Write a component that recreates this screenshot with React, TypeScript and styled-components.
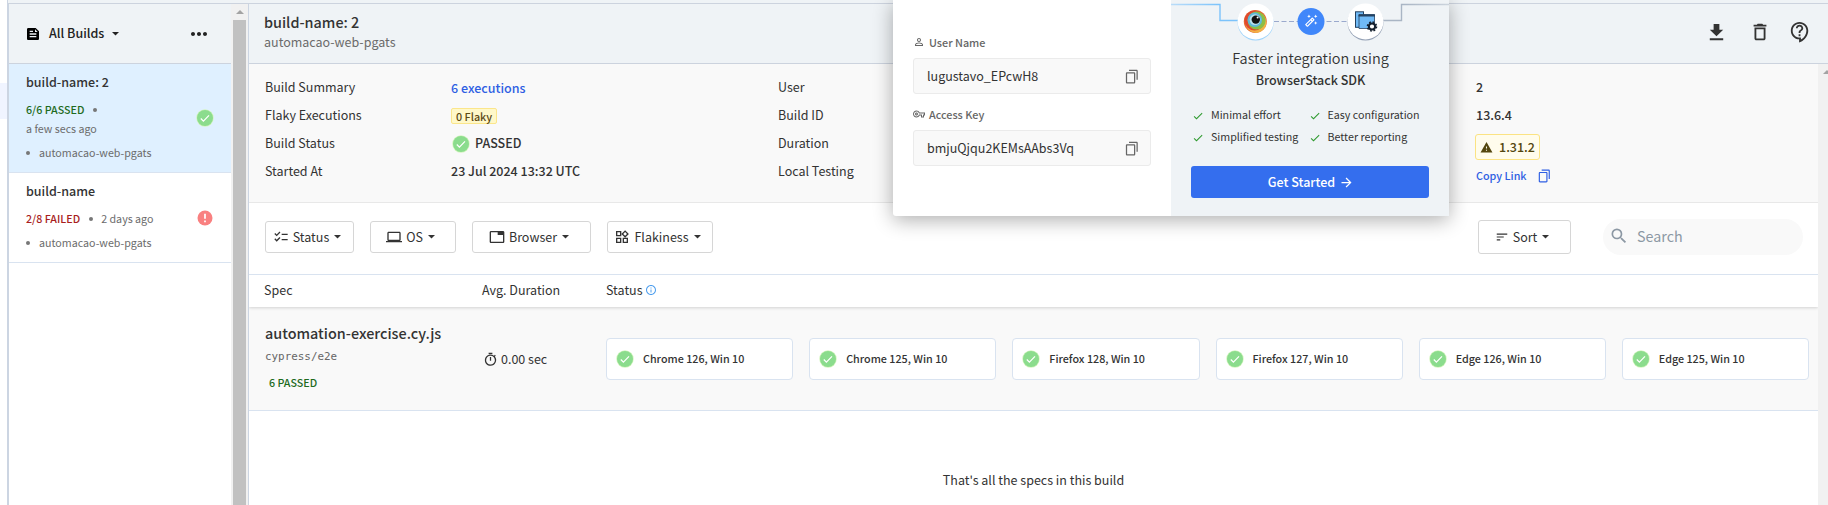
import React from 'react';
import styled, { createGlobalStyle } from 'styled-components';
import {
  MdArrowForward, MdCheck, MdChecklist, MdContentCopy, MdDeleteOutline, MdFeed,
  MdGetApp, MdInfoOutline, MdLaptop, MdMoreHoriz, MdOutlineAutoFixHigh, MdOutlineContactSupport,
  MdOutlineTimer, MdOutlineVpnKey, MdOutlineWidgets, MdPersonOutline, MdSearch, MdSort, MdTab, MdWarning,
} from 'react-icons/md';

const GlobalStyle = createGlobalStyle`
  * { box-sizing: border-box; }
  body {
    margin: 0;
    overflow: hidden;
    background: #fff;
    color: #333;
    font-family: 'Noto Sans CJK SC', 'Open Sans', sans-serif;
    font-size: 12.5px;
    line-height: 20px;
  }
  svg { display: block; flex: none; }
`;

const Page = styled.div`
  position: relative;
  display: flex;
  width: 1828px;
  height: 505px;
  overflow: hidden;
`;
const Rail = styled.div`
  width: 7px;
  flex: none;
  padding-top: 83px;
`;
const RailActive = styled.div`
  height: 36px;
  background: #f0f4ff;
`;
const Frame = styled.div`
  display: flex;
  flex-direction: column;
  width: 1821px;
  flex: none;
  border-left: 2px solid #ccd5e2;
`;
const TopStrip = styled.div`
  height: 4px;
  flex: none;
  margin-left: -1px;
  background: #eff3f6;
  border-bottom: 1px solid #ccd3de;
`;
const Columns = styled.div`
  display: flex;
  flex: 1;
  min-height: 0;
`;
const Sidebar = styled.aside`
  width: 222px;
  flex: none;
`;
const SidebarHeader = styled.div`
  display: flex;
  align-items: center;
  height: 60px;
  padding: 0 20px 0 16px;
  background: #eff3f6;
  border-bottom: 1px solid #ccd3de;
  color: #222;
`;
const SidebarTitle = styled.span`
  margin: 0 3px 0 8px;
  padding-bottom: 1px;
  font-weight: 500;
`;
const Spacer = styled.div`
  flex: 1;
`;
const BuildItem = styled.div<{ $active?: boolean }>`
  display: flex;
  align-items: center;
  justify-content: space-between;
  height: ${p => (p.$active ? 109 : 90)}px;
  padding: 0 17px;
  background: ${p => (p.$active ? '#dff0ff' : '#fff')};
  border-bottom: 1px solid #d9e3f0;
`;
const BuildText = styled.div`
  display: flex;
  flex-direction: column;
  height: 100%;
  padding-top: 8px;
`;
const BuildName = styled.div`
  margin-bottom: 8px;
  font-weight: 500;
`;
const BuildLine = styled.div<{ $gap?: number }>`
  display: flex;
  align-items: center;
  height: 19px;
  margin-top: ${p => p.$gap ?? 0}px;
  color: #6b6b6b;
  font-size: 10.7px;
`;
const BuildResult = styled.span<{ $color: string }>`
  color: ${p => p.$color};
  font-weight: 500;
`;
const Dot = styled.i<{ $l?: number; $r?: number }>`
  width: 4px;
  height: 4px;
  margin: 0 ${p => p.$r ?? 0}px 0 ${p => p.$l ?? 0}px;
  border-radius: 50%;
  background: #777;
`;
const ScrollTrack = styled.div`
  display: flex;
  flex-direction: column;
  align-items: center;
  width: 17px;
  flex: none;
  padding-top: 6px;
  background: #f1f1f1;
`;
const ScrollThumb = styled.div`
  width: 13px;
  flex: 1;
  margin-top: 6px;
  background: #c1c1c1;
`;
const ScrollArrow = styled.i`
  border: 4px solid transparent;
  border-top: 0;
  border-bottom-color: #a3a3a3;
`;
const Main = styled.main`
  display: flex;
  flex-direction: column;
  flex: 1;
  min-width: 0;
  border-left: 1px solid #ccd5e2;
`;
const MainHeader = styled.header`
  display: flex;
  align-items: center;
  height: 60px;
  flex: none;
  padding: 0 17px 0 15px;
  background: #eff3f6;
  border-bottom: 1px solid #ccd3de;
`;
const HeaderText = styled.div`
  flex: 1;
  height: 100%;
  padding-top: 8px;
`;
const BuildHeading = styled.h1`
  margin: 0;
  font-size: 14.4px;
  font-weight: 500;
  line-height: 20px;
`;
const ProjectName = styled.div`
  color: #6b6b6b;
`;
const HeaderIcons = styled.div`
  display: flex;
  align-items: center;
  gap: 20px;
  padding-bottom: 3px;
  svg:first-child { margin-right: 1px; }
  svg:last-child { margin-left: -2px; }
`;
const Body = styled.div`
  display: flex;
  flex: 1;
`;
const Content = styled.div`
  width: 1569px;
  flex: none;
`;
const Details = styled.section`
  display: grid;
  grid-template-columns: 186px 327px 698px 1fr;
  height: 139px;
  padding: 9px 0 0 16px;
  background: #f9f9f9;
  border-bottom: 1px solid #e8e8e8;
`;
const DetailColumn = styled.div<{ $strong?: boolean }>`
  display: flex;
  flex-direction: column;
  align-items: flex-start;
  font-weight: ${p => (p.$strong ? 500 : 400)};
`;
const DetailCell = styled.div<{ $h?: number; $drop?: boolean }>`
  display: flex;
  align-items: center;
  gap: 5px;
  height: ${p => p.$h ?? 28}px;
  padding-top: ${p => (p.$drop ? 2 : 0)}px;
`;
const StatusLabel = styled.span`
  padding-bottom: 2px;
`;
const StatusIconSlot = styled.span`
  padding-left: 1px;
`;
const Link = styled.a<{ $small?: boolean }>`
  color: #2f5fe3;
  font-size: ${p => (p.$small ? 10.75 : 12.5)}px;
  margin-right: ${p => (p.$small ? 5 : 0)}px;
`;
const FlakyBadge = styled.span`
  height: 16px;
  padding: 0 4px;
  border: 1px solid #fbe68b;
  border-radius: 2px;
  background: #fff8c9;
  color: #5c4a14;
  font-size: 10.8px;
  line-height: 14px;
`;
const VersionBadge = styled.span`
  display: flex;
  align-items: center;
  gap: 6px;
  height: 26px;
  margin-left: -1px;
  padding: 0 4px;
  border: 1px solid #fbe383;
  border-radius: 3px;
  background: #fffcec;
  color: #54470f;
`;
const Toolbar = styled.div`
  display: flex;
  align-items: center;
  gap: 16px;
  height: 71px;
  padding: 0 15px 3px 16px;
`;
const FilterButton = styled.button<{ $w: number; $h?: number }>`
  display: flex;
  align-items: center;
  justify-content: center;
  width: ${p => p.$w}px;
  height: ${p => p.$h ?? 32}px;
  padding: 0;
  border: 1px solid #d6d6d6;
  border-radius: 3px;
  background: #fff;
  color: #333;
  font: inherit;
`;
const FilterLabel = styled.span`
  margin-left: 4px;
`;
const SearchBox = styled.div`
  display: flex;
  align-items: center;
  gap: 8px;
  width: 200px;
  height: 36px;
  margin-left: 16px;
  padding: 0 0 2px 6px;
  border-radius: 18px;
  background: #f9f9f9;
  color: #8c98a4;
  font-size: 14.3px;
`;
const TableGrid = styled.div`
  display: grid;
  grid-template-columns: 218px 124px 1fr;
`;
const TableHead = styled(TableGrid)`
  position: relative;
  align-items: center;
  height: 33px;
  padding: 0 0 2px 15px;
  border-top: 1px solid #d9e3f0;
  box-shadow: 0 1px 3px rgba(0, 0, 0, 0.16);
  clip-path: inset(0 0 -6px 0);
`;
const HeadCell = styled.div`
  display: flex;
  align-items: center;
  gap: 2px;
`;
const SpecRow = styled(TableGrid)`
  height: 104px;
  padding: 1px 9px 0 15px;
  align-items: center;
  background: #f9f9f9;
  border-bottom: 1px solid #d9e3f0;
`;
const SpecInfo = styled.div`
  padding-bottom: 1px;
`;
const SpecName = styled.div`
  margin-left: 1px;
  font-size: 14.4px;
  font-weight: 500;
  line-height: 18px;
`;
const SpecPath = styled.div`
  margin: 5px 0 6px 1px;
  color: #666;
  font-family: 'DejaVu Sans Mono', monospace;
  font-size: 10.9px;
`;
const SpecResult = styled.div`
  margin-left: 5px;
  color: #1e6b1e;
  font-size: 10.7px;
  font-weight: 500;
`;
const Duration = styled.div`
  display: flex;
  align-items: center;
  gap: 3px;
  padding-left: 1px;
`;
const CardGrid = styled.div`
  display: grid;
  grid-template-columns: repeat(6, 1fr);
  gap: 16px;
`;
const RunCard = styled.div`
  display: flex;
  align-items: center;
  gap: 9px;
  height: 42px;
  padding-left: 9px;
  border: 1px solid #d9e3f0;
  border-radius: 4px;
  background: #fff;
  font-size: 10.75px;
  font-weight: 500;
`;
const EndMessage = styled.p`
  margin: 59px 0 0;
  text-align: center;
`;

const Popup = styled.div`
  position: absolute;
  top: 0;
  left: 893px;
  display: flex;
  width: 556px;
  height: 216px;
  border-radius: 0 0 3px 3px;
  background: #fff;
  box-shadow: 0 4px 20px rgba(0, 0, 0, 0.32);
`;
const Credentials = styled.div`
  width: 278px;
  padding: 32px 20px 0;
`;
const FieldLabel = styled.div`
  display: flex;
  align-items: center;
  gap: 4px;
  height: 20px;
  padding-bottom: 1px;
  color: #666;
  font-size: 10.8px;
  font-weight: 500;
`;
const FieldBox = styled.div`
  display: flex;
  align-items: center;
  justify-content: space-between;
  height: 36px;
  margin: 6px 0 10px;
  padding: 0 11px 0 13px;
  border: 1px solid #ebebeb;
  border-radius: 3px;
  background: #f9f9f9;
`;
const Flipped = styled.span<{ $color?: string }>`
  color: ${p => p.$color ?? '#666'};
  transform: scaleX(-1);
`;
const Promo = styled.div`
  display: flex;
  flex-direction: column;
  width: 278px;
  background: #eff3f6;
`;
const ArtWrap = styled.div`
  position: relative;
  height: 43px;
`;
const Wand = styled(MdOutlineAutoFixHigh)`
  position: absolute;
  left: 133px;
  top: 14px;
  color: #fff;
`;
const PromoTitle = styled.div`
  margin-top: 5px;
  padding-left: 1px;
  text-align: center;
  font-size: 14.5px;
  font-weight: 350;
`;
const PromoSubtitle = styled.div`
  margin-top: 2px;
  padding-left: 1px;
  text-align: center;
  font-weight: 500;
`;
const Benefits = styled.div`
  display: grid;
  grid-template-columns: 116.5px 1fr;
  grid-auto-rows: 22px;
  margin: 14px 0 0 21px;
  font-size: 10.7px;
`;
const Benefit = styled.div`
  display: flex;
  align-items: center;
  gap: 7px;
  white-space: nowrap;
  svg { margin-top: 1px; }
`;
const StartButton = styled.button`
  display: flex;
  align-items: center;
  justify-content: center;
  gap: 4px;
  height: 32px;
  margin: 18px 20px 0;
  padding: 0 0 0 2px;
  border: 0;
  border-radius: 3px;
  background: #346eee;
  color: #fff;
  font: inherit;
  font-weight: 500;
`;

const PassIcon = () => (
  <svg width="18" height="18" viewBox="0 0 18 18">
    <circle cx="9" cy="9" r="8.7" fill="#d3f5bd" />
    <circle cx="9" cy="9" r="8" fill="#8bdc8d" />
    <path d="M4.8 9.5l2.6 2.6 5.6-5.8" fill="none" stroke="#fff" strokeWidth="1.2" />
  </svg>
);
const FailIcon = () => (
  <svg width="18" height="18" viewBox="0 0 18 18">
    <circle cx="9" cy="9" r="7.5" fill="#f98080" />
    <path d="M9 4.8v5M9 11.4v1.8" stroke="#fff" strokeWidth="1.7" />
  </svg>
);
const Caret = () => (
  <svg width="17" height="8" viewBox="0 0 17 8">
    <path d="M5 2h7L8.5 5.5z" fill="currentColor" />
  </svg>
);
const IntegrationArt = () => (
  <svg width="278" height="43" viewBox="0 0 278 43">
    <defs>
      <linearGradient id="wireIn" x1="0" x2="1">
        <stop offset="0" stopColor="#84c6fb" stopOpacity="0.5" />
        <stop offset="0.7" stopColor="#7cc3fb" />
      </linearGradient>
      <linearGradient id="wireOut" x1="1" x2="0">
        <stop offset="0" stopColor="#a9b5c4" stopOpacity="0.5" />
        <stop offset="0.7" stopColor="#a9b5c4" />
      </linearGradient>
    </defs>
    <path d="M0 4.5H49V20.5H67" fill="none" stroke="url(#wireIn)" strokeWidth="1.4" />
    <path d="M278 4.5H230.5V20.5H212" fill="none" stroke="url(#wireOut)" strokeWidth="1.4" />
    <path d="M103 21.5H177" stroke="#9aa9cd" strokeDasharray="5 2.5" />
    <circle cx="84.6" cy="22.6" r="18" fill="#9dd3fb" />
    <circle cx="84.6" cy="21.4" r="18" fill="#fff" />
    <circle cx="84.3" cy="21.4" r="11.5" fill="#e86a32" />
    <circle cx="85" cy="22.4" r="10.5" fill="#f2b146" />
    <circle cx="83.5" cy="20.5" r="10" fill="#df4930" />
    <circle cx="85.6" cy="20.6" r="9" fill="#8dbd45" />
    <circle cx="83.8" cy="19.8" r="7.3" fill="#5fb8d8" />
    <circle cx="84" cy="19.6" r="5.4" fill="#b9e0ec" />
    <circle cx="84.8" cy="19.6" r="4.2" fill="#121212" />
    <circle cx="86.6" cy="17.6" r="1" fill="#fff" />
    <circle cx="140" cy="21.5" r="13.5" fill="#4087fa" />
    <circle cx="194.5" cy="22.6" r="18" fill="#94a1b5" />
    <circle cx="194.5" cy="21.4" r="18" fill="#fff" />
    <rect x="184.5" y="11.8" width="8" height="15.5" fill="#70baf6" stroke="#24415f" />
    <path d="M188 14.5H203.5V28.5H188z" fill="#70baf6" stroke="#24415f" strokeWidth="0.8" />
    <path d="M187.5 15.5H204" stroke="#24415f" strokeWidth="2" />
    <circle cx="201" cy="26.5" r="3.1" fill="#fff" stroke="#14202e" strokeWidth="2" />
    <circle cx="201" cy="26.5" r="4.5" fill="none" stroke="#14202e" strokeWidth="1.6" strokeDasharray="1.77 1.77" />
  </svg>
);

const runs = ['Chrome 126', 'Chrome 125', 'Firefox 128', 'Firefox 127', 'Edge 126', 'Edge 125'];
const benefits = ['Minimal effort', 'Easy configuration', 'Simplified testing', 'Better reporting'];

export default function App() {
  return (
    <Page>
      <GlobalStyle />
      <Rail><RailActive /></Rail>
      <Frame>
        <TopStrip />
        <Columns>
          <Sidebar>
            <SidebarHeader>
              <MdFeed size={16} color="#000" />
              <SidebarTitle>All Builds</SidebarTitle>
              <Caret />
              <Spacer />
              <MdMoreHoriz size={24} />
            </SidebarHeader>
            <BuildItem $active>
              <BuildText>
                <BuildName>build-name: 2</BuildName>
                <BuildLine><BuildResult $color="#1e6b1e">6/6 PASSED</BuildResult><Dot $l={9} /></BuildLine>
                <BuildLine>a few secs ago</BuildLine>
                <BuildLine $gap={5}><Dot $r={9} />automacao-web-pgats</BuildLine>
              </BuildText>
              <PassIcon />
            </BuildItem>
            <BuildItem>
              <BuildText>
                <BuildName>build-name</BuildName>
                <BuildLine><BuildResult $color="#a81e1e">2/8 FAILED</BuildResult><Dot $l={9} $r={8} />2 days ago</BuildLine>
                <BuildLine $gap={5}><Dot $r={9} />automacao-web-pgats</BuildLine>
              </BuildText>
              <FailIcon />
            </BuildItem>
          </Sidebar>
          <ScrollTrack><ScrollArrow /><ScrollThumb /></ScrollTrack>
          <Main>
            <MainHeader>
              <HeaderText>
                <BuildHeading>build-name: 2</BuildHeading>
                <ProjectName>automacao-web-pgats</ProjectName>
              </HeaderText>
              <HeaderIcons>
                <MdGetApp size={23} />
                <MdDeleteOutline size={22} />
                <MdOutlineContactSupport size={22} />
              </HeaderIcons>
            </MainHeader>
            <Body>
              <Content>
                <Details>
                  <DetailColumn>
                    <DetailCell>Build Summary</DetailCell>
                    <DetailCell>Flaky Executions</DetailCell>
                    <DetailCell>Build Status</DetailCell>
                    <DetailCell>Started At</DetailCell>
                  </DetailColumn>
                  <DetailColumn $strong>
                    <DetailCell $drop><Link>6 executions</Link></DetailCell>
                    <DetailCell $drop><FlakyBadge>0 Flaky</FlakyBadge></DetailCell>
                    <DetailCell $drop><StatusIconSlot><PassIcon /></StatusIconSlot><StatusLabel>PASSED</StatusLabel></DetailCell>
                    <DetailCell>23 Jul 2024 13:32 UTC</DetailCell>
                  </DetailColumn>
                  <DetailColumn>
                    <DetailCell>User</DetailCell>
                    <DetailCell>Build ID</DetailCell>
                    <DetailCell>Duration</DetailCell>
                    <DetailCell>Local Testing</DetailCell>
                  </DetailColumn>
                  <DetailColumn $strong>
                    <DetailCell>2</DetailCell>
                    <DetailCell>13.6.4</DetailCell>
                    <DetailCell $h={36}><VersionBadge><MdWarning size={13} />1.31.2</VersionBadge></DetailCell>
                    <DetailCell $h={22}><Link $small>Copy Link</Link><Flipped $color="#2f5fe3"><MdContentCopy size={14} /></Flipped></DetailCell>
                  </DetailColumn>
                </Details>
                <Toolbar>
                  <FilterButton $w={89}><MdChecklist size={16} /><FilterLabel>Status</FilterLabel><Caret /></FilterButton>
                  <FilterButton $w={86}><MdLaptop size={16} /><FilterLabel>OS</FilterLabel><Caret /></FilterButton>
                  <FilterButton $w={119}><MdTab size={16} /><FilterLabel>Browser</FilterLabel><Caret /></FilterButton>
                  <FilterButton $w={106}><MdOutlineWidgets size={16} /><FilterLabel>Flakiness</FilterLabel><Caret /></FilterButton>
                  <Spacer />
                  <FilterButton $w={93} $h={34}><MdSort size={14} /><FilterLabel>Sort</FilterLabel><Caret /></FilterButton>
                  <SearchBox><MdSearch size={20} />Search</SearchBox>
                </Toolbar>
                <TableHead>
                  <HeadCell>Spec</HeadCell>
                  <HeadCell>Avg. Duration</HeadCell>
                  <HeadCell>Status<MdInfoOutline size={12} color="#4f9fee" /></HeadCell>
                </TableHead>
                <SpecRow>
                  <SpecInfo>
                    <SpecName>automation-exercise.cy.js</SpecName>
                    <SpecPath>cypress/e2e</SpecPath>
                    <SpecResult>6 PASSED</SpecResult>
                  </SpecInfo>
                  <Duration><MdOutlineTimer size={15} />0.00 sec</Duration>
                  <CardGrid>
                    {runs.map(run => <RunCard key={run}><PassIcon />{run}, Win 10</RunCard>)}
                  </CardGrid>
                </SpecRow>
                <EndMessage>That's all the specs in this build</EndMessage>
              </Content>
              <ScrollTrack><ScrollArrow /></ScrollTrack>
            </Body>
          </Main>
        </Columns>
      </Frame>
      <Popup>
        <Credentials>
          <FieldLabel><MdPersonOutline size={12} />User Name</FieldLabel>
          <FieldBox>lugustavo_EPcwH8<Flipped><MdContentCopy size={15} /></Flipped></FieldBox>
          <FieldLabel><MdOutlineVpnKey size={12} />Access Key</FieldLabel>
          <FieldBox>bmjuQjqu2KEMsAAbs3Vq<Flipped><MdContentCopy size={15} /></Flipped></FieldBox>
        </Credentials>
        <Promo>
          <ArtWrap><IntegrationArt /><Wand size={14} /></ArtWrap>
          <PromoTitle>Faster integration using</PromoTitle>
          <PromoSubtitle>BrowserStack SDK</PromoSubtitle>
          <Benefits>
            {benefits.map(b => (
              <Benefit key={b}><MdCheck size={12} color="#2f9a2f" />{b}</Benefit>
            ))}
          </Benefits>
          <StartButton>Get Started<MdArrowForward size={15} /></StartButton>
        </Promo>
      </Popup>
    </Page>
  );
}
